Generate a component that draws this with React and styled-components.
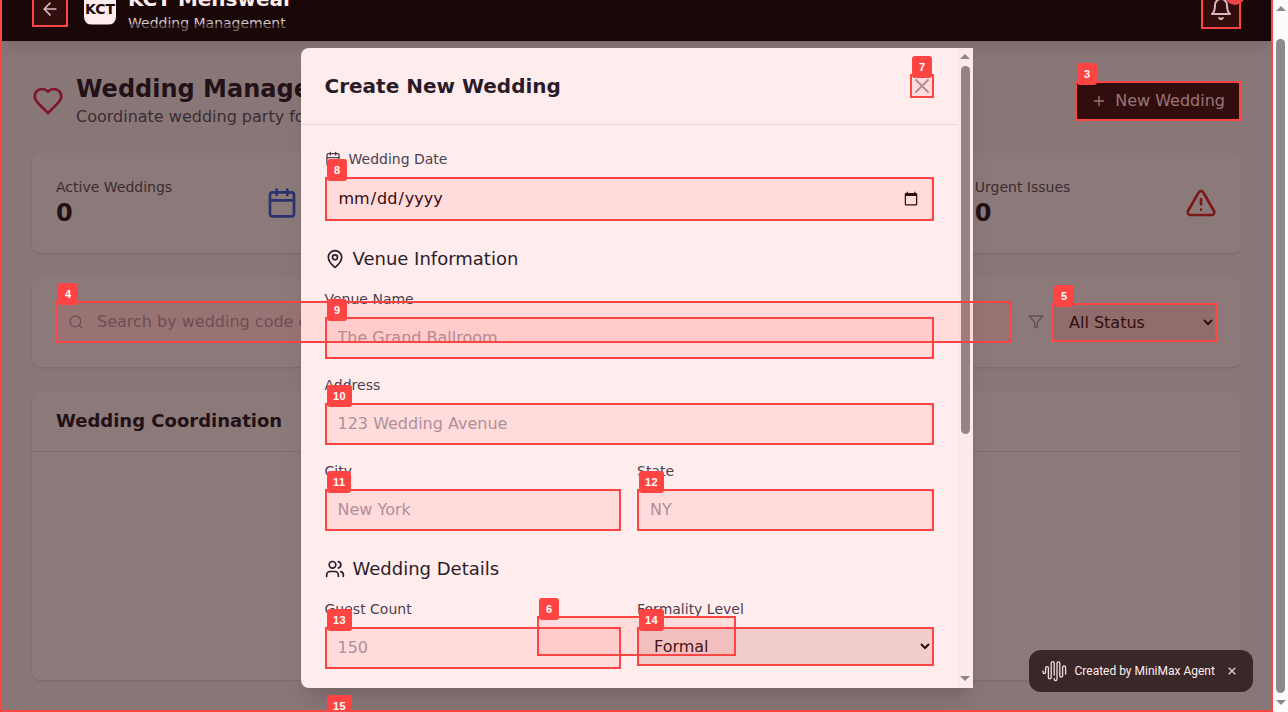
import React from 'react';
import styled, { createGlobalStyle } from 'styled-components';

const GlobalStyle = createGlobalStyle`
  *, *::before, *::after { box-sizing: border-box; }
  body { margin: 0; overflow: hidden; font-family: 'DejaVu Sans', sans-serif; font-size: 16px; line-height: 24px; color: #000; }
  h1, h2, h3, p { margin: 0; }
  input, select, button { font: inherit; }
`;

const Screen = styled.div`
  position: relative;
  display: flex;
  width: 1288px;
  height: 712px;
  overflow: hidden;
`;
const Page = styled.div`
  flex: 1;
  height: 712px;
  overflow: hidden;
  background: #f9fafb;
`;

const Bar = styled.div`
  width: 15px;
  flex: none;
  display: flex;
  flex-direction: column;
  align-items: center;
  background: #fcfcfc;
`;
const Thumb = styled.div`
  width: 9px;
  height: ${(p) => p.$h}px;
  margin-top: ${(p) => p.$gap}px;
  border-radius: 5px;
  background: #8b8b8b;
`;
const Arrow = styled.div`
  border: 5px solid transparent;
  border-top-width: 0;
  border-bottom: 5px solid #8b8b8b;
  margin-top: ${(p) => p.$mt}px;
  margin-bottom: ${(p) => p.$mb || 0}px;
  ${(p) => p.$down && 'transform: rotate(180deg); margin-top: auto;'}
`;

const Header = styled.header`
  position: relative;
  height: 64px;
  margin-top: -23px;
  padding: 0 32px;
  display: flex;
  align-items: center;
  justify-content: space-between;
  background: #000;
  box-shadow: 0 10px 15px -3px rgba(0, 0, 0, 0.1), 0 4px 6px -4px rgba(0, 0, 0, 0.1);
`;
const Brand = styled.div`
  display: flex;
  align-items: center;
`;
const IconButton = styled.button`
  position: relative;
  display: flex;
  padding: 8px;
  border: 0;
  background: none;
  color: #d1d5db;
`;
const Logo = styled.div`
  width: 32px;
  height: 32px;
  margin: 0 12px 0 16px;
  display: flex;
  align-items: center;
  justify-content: center;
  border-radius: 8px;
  background: #fff;
  font-size: 14px;
  font-weight: 700;
`;
const BrandName = styled.h1`
  font-size: 20px;
  line-height: 28px;
  color: #fff;
`;
const BrandSub = styled.p`
  font-size: 14px;
  line-height: 20px;
  color: #d1d5db;
`;
const Dot = styled.span`
  position: absolute;
  top: -4px;
  right: -4px;
  width: 20px;
  height: 20px;
  border-radius: 50%;
  background: #ef4444;
`;

const Main = styled.main`
  padding: 32px;
  display: flex;
  flex-direction: column;
  gap: 24px;
`;
const TitleRow = styled.div`
  display: flex;
  align-items: center;
  justify-content: space-between;
`;
const TitleGroup = styled.div`
  display: flex;
  align-items: center;
  gap: 12px;
  color: #e11d48;
`;
const Title = styled.h2`
  font-size: 24px;
  line-height: 32px;
  color: #111827;
`;
const Subtitle = styled.p`
  color: #4b5563;
`;
const PrimaryButton = styled.button`
  display: flex;
  align-items: center;
  gap: 8px;
  height: 40px;
  padding: 0 16px;
  border: 0;
  border-radius: 8px;
  background: #000;
  color: #fff;
`;
const Stats = styled.div`
  display: grid;
  grid-template-columns: repeat(4, 1fr);
  gap: 16px;
`;
const Card = styled.section`
  background: #fff;
  border-radius: 8px;
  box-shadow: 0 1px 3px rgba(0, 0, 0, 0.1), 0 1px 2px -1px rgba(0, 0, 0, 0.1);
`;
const Stat = styled(Card)`
  height: 100px;
  padding: 24px;
  display: flex;
  align-items: center;
  justify-content: space-between;
  color: ${(p) => p.$color};
`;
const StatLabel = styled.p`
  font-size: 14px;
  line-height: 20px;
  color: #4b5563;
`;
const StatValue = styled.p`
  font-size: 24px;
  line-height: 32px;
  font-weight: 700;
  color: #111827;
`;
const FilterCard = styled(Card)`
  padding: 24px;
  display: flex;
  align-items: center;
  color: #9ca3af;
`;
const SearchBox = styled.div`
  flex: 1;
  height: 42px;
  margin-right: 16px;
  padding: 0 12px;
  display: flex;
  align-items: center;
  gap: 13px;
  border: 1px solid #d1d5db;
  border-left-width: 0;
  border-radius: 8px;
  background: #fff;
`;
const Bare = styled.input`
  flex: 1;
  border: 0;
  padding: 0;
  background: none;
  &::placeholder { color: #9ca3af; }
`;
const Select = styled.select`
  width: ${(p) => p.$w || '100%'};
  height: 39px;
  margin: ${(p) => p.$m || '0'};
  padding: 8px 12px;
  border: 1px solid #d1d5db;
  border-radius: 8px;
  padding-right: 0;
  background: #efefef;
  color: #000;
`;
const ListCard = styled(Card)`
  height: 289px;
`;
const ListHeader = styled.div`
  padding: 16px 24px;
  border-bottom: 1px solid #e5e7eb;
  font-size: 18px;
  line-height: 28px;
  font-weight: 700;
  color: #111827;
`;

const Backdrop = styled.div`
  position: absolute;
  top: 24px;
  left: 0;
  width: 1273px;
  height: 688px;
  display: flex;
  align-items: center;
  justify-content: center;
  background: rgba(0, 0, 0, 0.5);
`;
const Modal = styled.div`
  width: 672px;
  height: 640.8px;
  display: flex;
  overflow: hidden;
  border-radius: 8px 0 0 8px;
  background: #fff;
  box-shadow: 0 20px 25px -5px rgba(0, 0, 0, 0.1), 0 8px 10px -6px rgba(0, 0, 0, 0.1);
`;
const ModalContent = styled.div`
  flex: 1;
`;
const ModalHeader = styled.div`
  padding: 24px;
  display: flex;
  align-items: center;
  justify-content: space-between;
  border-bottom: 1px solid #e5e7eb;
  color: #9ca3af;
`;
const ModalTitle = styled.h2`
  font-size: 20px;
  line-height: 28px;
  color: #111827;
`;
const Form = styled.div`
  padding: 24px;
  display: flex;
  flex-direction: column;
  gap: 24px;
`;
const Group = styled.div`
  display: flex;
  flex-direction: column;
  gap: 16px;
`;
const GroupTitle = styled.h3`
  display: flex;
  align-items: center;
  gap: 8px;
  font-size: 18px;
  line-height: 28px;
  font-weight: 400;
  color: #111827;
`;
const Columns = styled.div`
  display: grid;
  grid-template-columns: 1fr 1fr;
  gap: 16px;
`;
const Field = styled.div`
  display: flex;
  flex-direction: column;
  gap: 8px;
`;
const Label = styled.label`
  display: flex;
  align-items: center;
  gap: 8px;
  font-size: 14px;
  line-height: 20px;
  color: #374151;
`;
const Input = styled.input`
  width: 100%;
  height: ${(p) => p.$h || 42}px;
  padding: 8px 12px;
  border: 1px solid #d1d5db;
  border-radius: 8px;
  background: #fff;
  color: #000;
  &::placeholder { color: #9ca3af; }
`;

const Toast = styled.div`
  position: absolute;
  left: 1029px;
  top: 650px;
  width: 224px;
  height: 42px;
  padding: 0 17px 0 13px;
  display: flex;
  align-items: center;
  border-radius: 12px;
  background: #242424;
  color: #fff;
  font: 400 12px/16px Roboto, sans-serif;
`;
const ToastText = styled.span`
  flex: 1;
  margin-left: 7.5px;
  white-space: nowrap;
`;

const Marker = styled.div`
  position: absolute;
  left: ${(p) => p.$x}px;
  top: ${(p) => p.$y}px;
  width: ${(p) => p.$w}px;
  height: ${(p) => p.$h}px;
  border: 2px solid #ff4444;
  background: rgba(255, 68, 68, 0.1);
`;
const Tag = styled.span`
  position: absolute;
  left: 0;
  top: -20px;
  min-width: 20px;
  height: 22px;
  padding: 4px 5.5px 4px 6px;
  border-radius: 3px;
  background: #ff4444;
  color: #fff;
  font-family: 'Liberation Sans', Arial, sans-serif;
  font-size: 11px;
  line-height: 15px;
  font-weight: bold;
  letter-spacing: 0.5px;
  text-align: center;
`;

const Icon = ({ size = 24, children }) => (
  <svg width={size} height={size} viewBox="0 0 24 24" fill="none" stroke="currentColor"
    strokeWidth="2" strokeLinecap="round" strokeLinejoin="round">
    {children}
  </svg>
);
const CalendarIcon = ({ size }) => (
  <Icon size={size}>
    <path d="M8 2v4M16 2v4M3 10h18" />
    <rect width="18" height="18" x="3" y="4" rx="2" />
  </Icon>
);

const MARKERS = [
  { x: 0, y: -32, w: 1273, h: 744 },
  { x: 32, y: -9, w: 36, h: 36 },
  { x: 1201, y: -11, w: 40, h: 40 },
  { n: 3, x: 1075, y: 81, w: 166, h: 40 },
  { n: 4, x: 56, y: 301, w: 956, h: 42 },
  { n: 5, x: 1052, y: 303, w: 165, h: 39 },
  { n: 6, x: 537, y: 616, w: 199, h: 40 },
  { n: 7, x: 910, y: 74, w: 24, h: 24 },
  { n: 8, x: 325, y: 177, w: 609, h: 44 },
  { n: 9, x: 325, y: 317, w: 609, h: 42 },
  { n: 10, x: 325, y: 403, w: 609, h: 42 },
  { n: 11, x: 325, y: 489, w: 296, h: 42 },
  { n: 12, x: 637, y: 489, w: 297, h: 42 },
  { n: 13, x: 325, y: 627, w: 296, h: 42 },
  { n: 14, x: 637, y: 627, w: 297, h: 39 },
  { n: 15, x: 325, y: 713, w: 609, h: 42 },
];

function TextField({ label, placeholder }) {
  return (
    <Field>
      <Label>{label}</Label>
      <Input placeholder={placeholder} />
    </Field>
  );
}

export default function App() {
  return (
    <Screen>
      <GlobalStyle />
      <Page>
        <Header>
          <Brand>
            <IconButton>
              <Icon size={20}><path d="m12 19-7-7 7-7M19 12H5" /></Icon>
            </IconButton>
            <Logo>KCT</Logo>
            <div>
              <BrandName>KCT Menswear</BrandName>
              <BrandSub>Wedding Management</BrandSub>
            </div>
          </Brand>
          <IconButton>
            <Icon>
              <path d="M6 8a6 6 0 0 1 12 0c0 7 3 9 3 9H3s3-2 3-9" />
              <path d="M10.3 21a1.94 1.94 0 0 0 3.4 0" />
            </Icon>
            <Dot />
          </IconButton>
        </Header>
        <Main>
          <TitleRow>
            <TitleGroup>
              <Icon size={32}>
                <path d="M19 14c1.49-1.46 3-3.21 3-5.5A5.5 5.5 0 0 0 16.5 3c-1.76 0-3 .5-4.5 2-1.5-1.5-2.74-2-4.5-2A5.5 5.5 0 0 0 2 8.5c0 2.3 1.5 4.05 3 5.5l7 7Z" />
              </Icon>
              <div>
                <Title>Wedding Management</Title>
                <Subtitle>Coordinate wedding party for</Subtitle>
              </div>
            </TitleGroup>
            <PrimaryButton>
              <Icon size={16}><path d="M5 12h14M12 5v14" /></Icon>
              New Wedding
            </PrimaryButton>
          </TitleRow>
          <Stats>
            <Stat $color="#2563eb">
              <div>
                <StatLabel>Active Weddings</StatLabel>
                <StatValue>0</StatValue>
              </div>
              <CalendarIcon size={32} />
            </Stat>
            <Stat />
            <Stat />
            <Stat $color="#dc2626">
              <div>
                <StatLabel>Urgent Issues</StatLabel>
                <StatValue>0</StatValue>
              </div>
              <Icon size={32}>
                <path d="m21.73 18-8-14a2 2 0 0 0-3.48 0l-8 14A2 2 0 0 0 4 21h16a2 2 0 0 0 1.73-3" />
                <path d="M12 9v4M12 17h.01" />
              </Icon>
            </Stat>
          </Stats>
          <FilterCard>
            <SearchBox>
              <Icon size={16}><circle cx="11" cy="11" r="8" /><path d="m21 21-4.3-4.3" /></Icon>
              <Bare placeholder="Search by wedding code or" />
            </SearchBox>
            <Icon size={16}><path d="M22 3H2l8 9.46V19l4 2v-8.54L22 3z" /></Icon>
            <Select $w="165px" $m="0 0 0 8px"><option>All Status</option></Select>
          </FilterCard>
          <ListCard>
            <ListHeader>Wedding Coordination</ListHeader>
          </ListCard>
        </Main>
      </Page>
      <Bar>
        <Arrow $mt={6} />
        <Thumb $gap={28} $h={654} />
        <Arrow $down $mb={7} />
      </Bar>

      <Backdrop>
        <Modal>
          <ModalContent>
            <ModalHeader>
              <ModalTitle>Create New Wedding</ModalTitle>
              <Icon><path d="M18 6 6 18M6 6l12 12" /></Icon>
            </ModalHeader>
            <Form>
              <Field>
                <Label><CalendarIcon size={16} />Wedding Date</Label>
                <Input type="date" $h={44} />
              </Field>
              <Group>
                <GroupTitle>
                  <Icon size={20}>
                    <path d="M20 10c0 4.993-5.539 10.193-7.399 11.799a1 1 0 0 1-1.202 0C9.539 20.193 4 14.993 4 10a8 8 0 0 1 16 0" />
                    <circle cx="12" cy="10" r="3" />
                  </Icon>
                  Venue Information
                </GroupTitle>
                <TextField label="Venue Name" placeholder="The Grand Ballroom" />
                <TextField label="Address" placeholder="123 Wedding Avenue" />
                <Columns>
                  <TextField label="City" placeholder="New York" />
                  <TextField label="State" placeholder="NY" />
                </Columns>
              </Group>
              <Group>
                <GroupTitle>
                  <Icon size={20}>
                    <path d="M16 21v-2a4 4 0 0 0-4-4H6a4 4 0 0 0-4 4v2" />
                    <circle cx="9" cy="7" r="4" />
                    <path d="M22 21v-2a4 4 0 0 0-3-3.87M16 3.13a4 4 0 0 1 0 7.75" />
                  </Icon>
                  Wedding Details
                </GroupTitle>
                <Columns>
                  <TextField label="Guest Count" placeholder="150" />
                  <Field>
                    <Label>Formality Level</Label>
                    <Select><option>Formal</option></Select>
                  </Field>
                </Columns>
              </Group>
            </Form>
          </ModalContent>
          <Bar>
            <Arrow $mt={6} />
            <Thumb $gap={7} $h={368} />
            <Arrow $down $mb={7} />
          </Bar>
        </Modal>
      </Backdrop>

      <Toast>
        <svg width="25" height="22" viewBox="0 0 25 22" fill="none" stroke="#eee" strokeWidth="1.3" strokeLinecap="round">
          <path d="M1 11v1.2a1.3 1.3 0 0 0 2.6 0V8a1.4 1.4 0 0 1 2.8 0v9.5a1.4 1.4 0 0 0 2.8 0V3.2a1.5 1.5 0 0 1 3 0V15" />
          <path d="M12.2 18.4v.8a1.4 1.4 0 0 0 2.8 0V3.2a1.4 1.4 0 0 1 2.8 0v12.6a1.4 1.4 0 0 0 2.8 0V7.5a1.5 1.5 0 0 1 3 0V14" />
        </svg>
        <ToastText>Created by MiniMax Agent</ToastText>
        <svg width="8" height="8" viewBox="0 0 8 8" stroke="#d4d4d4" strokeWidth="1.5"><path d="m.7.7 6.6 6.6M7.3.7.7 7.3" /></svg>
      </Toast>

      {MARKERS.map((m) => (
        <Marker key={`${m.x}-${m.y}`} $x={m.x} $y={m.y} $w={m.w} $h={m.h}>
          {m.n && <Tag>{m.n}</Tag>}
        </Marker>
      ))}
    </Screen>
  );
}
